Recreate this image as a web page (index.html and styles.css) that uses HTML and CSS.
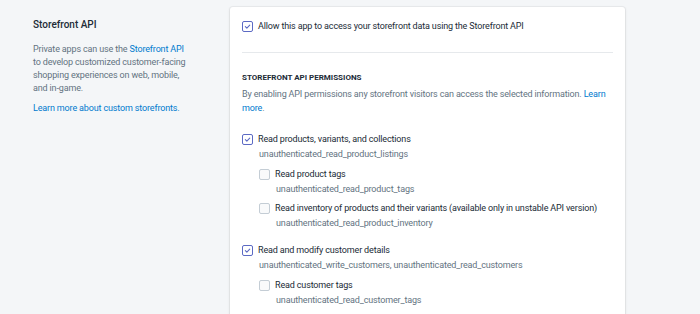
FILE: index.html
```html
<!DOCTYPE html>
<html lang="en">
<head>
  <meta charset="UTF-8" />
  <meta name="viewport" content="width=device-width, initial-scale=1.0" />
  <title>Storefront API</title>
  <link rel="stylesheet" href="styles.css">
</head>
<body>
  <div class="layout">
    <aside class="annotation">
      <h2>Storefront API</h2>
      <p>Private apps can use the <a href="#">Storefront API</a> to develop customized customer-facing shopping experiences on web, mobile, and in-game.</p>
      <p><a href="#">Learn more about custom storefronts.</a></p>
    </aside>

    <section class="card">
      <div class="card-top">
        <label class="check">
          <span class="box checked"><svg viewBox="0 0 10 10"><path d="M2.6 5.2 4.3 6.8 7.5 3.4" /></svg></span>
          <span>Allow this app to access your storefront data using the Storefront API</span>
        </label>
      </div>

      <div class="card-section">
        <h3>Storefront API permissions</h3>
        <p class="hint">By enabling API permissions any storefront visitors can access the selected information. <a href="#">Learn more</a>.</p>

        <div class="perm">
          <label class="check">
            <span class="box checked"><svg viewBox="0 0 10 10"><path d="M2.6 5.2 4.3 6.8 7.5 3.4" /></svg></span>
            <span>Read products, variants, and collections</span>
          </label>
          <div class="scope">unauthenticated_read_product_listings</div>

          <div class="perm nested">
            <label class="check">
              <span class="box"></span>
              <span>Read product tags</span>
            </label>
            <div class="scope">unauthenticated_read_product_tags</div>
          </div>

          <div class="perm nested">
            <label class="check">
              <span class="box"></span>
              <span>Read inventory of products and their variants (available only in unstable API version)</span>
            </label>
            <div class="scope">unauthenticated_read_product_inventory</div>
          </div>
        </div>

        <div class="perm">
          <label class="check">
            <span class="box checked"><svg viewBox="0 0 10 10"><path d="M2.6 5.2 4.3 6.8 7.5 3.4" /></svg></span>
            <span>Read and modify customer details</span>
          </label>
          <div class="scope">unauthenticated_write_customers, unauthenticated_read_customers</div>

          <div class="perm nested">
            <label class="check">
              <span class="box"></span>
              <span>Read customer tags</span>
            </label>
            <div class="scope">unauthenticated_read_customer_tags</div>
          </div>
        </div>
      </div>
    </section>
  </div>
</body>
</html>
```

FILE: styles.css
```css
* { margin: 0; padding: 0; box-sizing: border-box; }
body {
  font-family: Roboto, "Noto Sans", sans-serif;
  background: #f4f6f8;
  color: #212b36;
  font-size: 9px;
  letter-spacing: -0.15px;
  overflow: hidden;
}
a { color: #007ace; text-decoration: none; }
.layout {
  display: flex;
  padding-top: 7px;
}
.annotation {
  width: 230px;
  flex-shrink: 0;
  padding: 11px 40px 0 33px;
}
.annotation h2 {
  font-size: 10px;
  font-weight: 500;
  letter-spacing: 0;
  line-height: 14px;
  margin-bottom: 10.5px;
}
.annotation p {
  color: #637381;
  line-height: 13px;
  margin-bottom: 7px;
}
.card {
  width: 395px;
  background: #fff;
  border-radius: 3px;
  box-shadow: 0 0 0 1px rgba(63,63,68,0.05), 0 1px 3px 0 rgba(63,63,68,0.15);
  padding: 0 12px;
  min-height: 340px;
}
.card-top {
  padding: 12px 0 18px;
  border-bottom: 1px solid #e6e9ec;
}
.card-section {
  padding-top: 18px;
}
.card-section h3 {
  font-size: 8px;
  font-weight: 700;
  letter-spacing: 0;
  text-transform: uppercase;
  line-height: 14px;
  margin-bottom: 3px;
}
.hint {
  color: #637381;
  line-height: 13.5px;
  margin-bottom: 17px;
}
.check {
  display: flex;
  align-items: center;
  gap: 5px;
  line-height: 15px;
}
.box {
  width: 11px;
  height: 11px;
  flex-shrink: 0;
  border: 1px solid #c4cdd5;
  border-radius: 2px;
  background: #f9fafb;
  display: flex;
}
.box.checked {
  border: 1.5px solid #5c6ac4;
  background: #fff;
}
.box svg {
  width: 100%;
  height: 100%;
  fill: none;
  stroke: #5c6ac4;
  stroke-width: 1.2;
  stroke-linecap: round;
  stroke-linejoin: round;
}
.scope {
  color: #637381;
  line-height: 15px;
  padding-left: 17px;
}
.perm + .perm { margin-top: 12px; }
.perm.nested {
  margin-top: 5px;
  padding-left: 17px;
}
.perm.nested + .perm.nested { margin-top: 4px; }
```
